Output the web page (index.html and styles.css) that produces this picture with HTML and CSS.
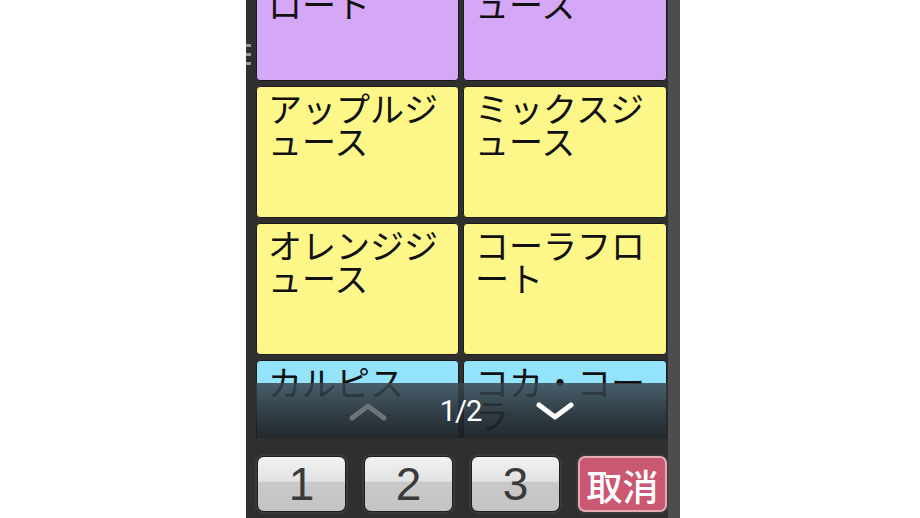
FILE: index.html
```html
<!DOCTYPE html>
<html lang="ja">
<head>
    <meta charset="UTF-8">
    <title>ドリンク</title>
    <link rel="stylesheet" href="styles.css">
</head>
<body>
    <div class="phone">
        <div class="edge-marks"><span></span><span></span><span></span></div>
        <div class="screen">
            <div class="grid">
                <div class="tile purple">カルピスフロート</div>
                <div class="tile purple">グレープジュース</div>
                <div class="tile yellow">アップルジュース</div>
                <div class="tile yellow">ミックスジュース</div>
                <div class="tile yellow">オレンジジュース</div>
                <div class="tile yellow">コーラフロート</div>
                <div class="tile cyan">カルピス</div>
                <div class="tile cyan">コカ・コーラ</div>
            </div>

            <!-- page nav over the last row -->
            <div class="pager">
                <svg class="chev up" width="40" height="20" viewBox="0 0 40 20">
                    <polyline points="4,17 20,5 36,17" fill="none" stroke="#6e747a" stroke-width="5" stroke-linecap="round" stroke-linejoin="round"/>
                </svg>
                <span class="page-no">1/2</span>
                <svg class="chev down" width="40" height="20" viewBox="0 0 40 20">
                    <polyline points="4,4 20,16 36,4" fill="none" stroke="#ffffff" stroke-width="5" stroke-linecap="round" stroke-linejoin="round"/>
                </svg>
            </div>
        </div>

        <div class="keys">
            <button class="key">1</button>
            <button class="key">2</button>
            <button class="key">3</button>
            <button class="key cancel">取消</button>
        </div>
    </div>
</body>
</html>
```

FILE: styles.css
```css
body {
    margin: 0;
    padding: 0;
    background-color: #ffffff;
    font-family: "Noto Sans CJK JP", "Noto Sans", sans-serif;
    overflow: hidden;
}

.phone {
    position: relative;
    width: 422px;
    height: 518px;
    margin-left: 246px;
    background-color: #2f2f2f;
    border-right: 12px solid #4d4d4f;
    overflow: hidden;
}

.edge-marks {
    position: absolute;
    left: 0;
    top: 44px;
    display: flex;
    flex-direction: column;
    gap: 6px;
}

.edge-marks span {
    display: block;
    width: 5px;
    height: 3px;
    background-color: #9a9a9a;
}

.screen {
    position: relative;
    margin: -51px 0 0 10px;
    height: 489px;
    width: 411px;
    overflow: hidden;
}

.grid {
    display: grid;
    grid-template-columns: 203px 204px;
    grid-auto-rows: 132px;
    gap: 5px 4px;
}

.tile {
    box-sizing: border-box;
    padding: 4px 10px 0 11px;
    border: 1px solid #1c1c1c;
    border-radius: 4px;
    font-size: 34px;
    line-height: 33px;
    color: #111;
    word-break: break-all;
}

.purple { background-color: #d5a7f7; }
.yellow { background-color: #fdf78a; }
.cyan { background-color: #93e3fb; }

.pager {
    position: absolute;
    left: 0;
    right: 0;
    top: 434px;
    height: 55px;
    display: flex;
    align-items: center;
    justify-content: center;
    background: linear-gradient(180deg, rgba(58,72,82,0.85) 0%, rgba(36,40,46,0.9) 60%, rgba(28,30,34,0.94) 100%);
}

.chev.up {
    margin-right: 52px;
}

.chev.down {
    margin-left: 54px;
}

.page-no {
    font-family: "Roboto", "Liberation Sans", sans-serif;
    font-size: 29px;
    color: #fff;
    letter-spacing: -1px;
}

.keys {
    display: flex;
    gap: 18px;
    padding: 18px 0 0 11px;
}

.key {
    width: 89px;
    height: 56px;
    padding: 0;
    border: 1px solid #1e1e1e;
    border-radius: 7px;
    background: linear-gradient(180deg, #f2f2f2 0%, #e2e2e2 45%, #c9c9c9 46%, #c4c4c4 100%);
    box-shadow: 0 0 0 2px #3a3a3a;
    font-family: "Liberation Sans", "Noto Sans", sans-serif;
    font-size: 46px;
    color: #3a3a3a;
    line-height: 54px;
}

.key.cancel {
    background: #c95870;
    border: 2px solid #e7aab7;
    color: #fff;
    font-family: "Noto Sans CJK JP", sans-serif;
    font-size: 36px;
    font-weight: 500;
}
```
